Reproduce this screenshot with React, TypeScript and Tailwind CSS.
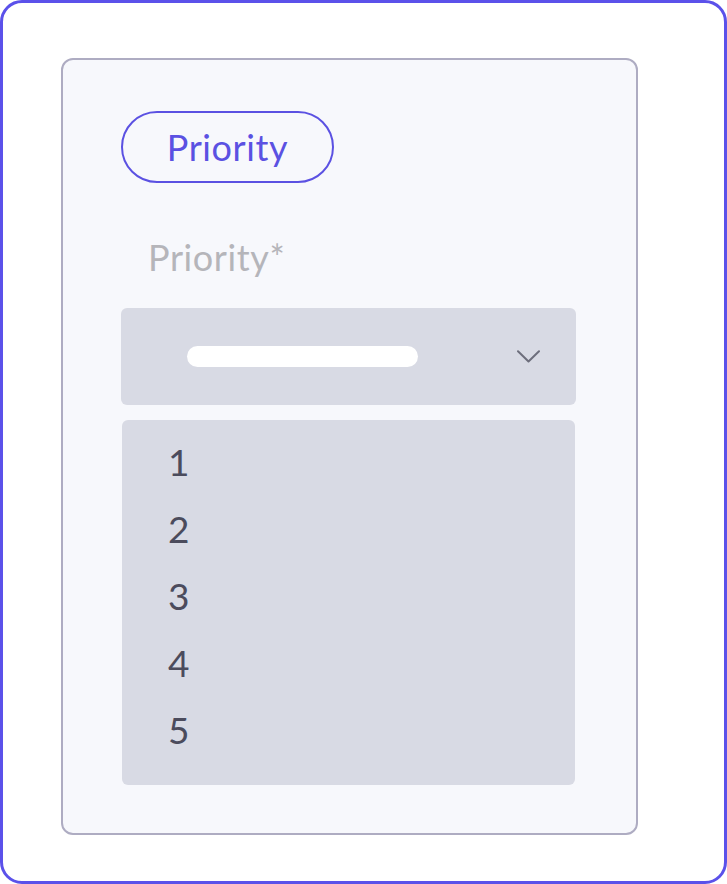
export default function App() {
  const options = ["1", "2", "3", "4", "5"];
  return (
    <div
      className="w-[727px] h-[884px] bg-white"
      style={{ fontFamily: "Lato, 'Open Sans', sans-serif" }}
    >
      <div className="w-[727px] h-[884px] rounded-[22px] border-[3px] border-[#5b51ea] bg-white pt-[55px] pl-[58px]">
        <div className="w-[577px] h-[777px] rounded-[12px] border-2 border-[#aeacc2] bg-[#f7f8fc] pl-[58px] pt-[51px]">
          {/* tag */}
          <div className="w-[213px] h-[72px] rounded-full border-2 border-[#5b51e2] flex items-center justify-center text-[36px] leading-[36px] tracking-[0.6px] text-[#5b51e2]">
            Priority
          </div>

          {/* field label */}
          <div className="mt-[56px] pl-[27px] text-[36px] leading-[36px] tracking-[0.6px] text-[#b5b5ba]">
            Priority*
          </div>

          {/* select */}
          <div className="mt-[33px] w-[455px] h-[97px] rounded-[6px] bg-[#d8dae4] flex items-center pl-[66px] pr-[36px]">
            <div className="w-[231px] h-[21px] rounded-full bg-white" />
            <div className="flex-1" />
            <svg width="23" height="13" viewBox="0 0 23 13" fill="none">
              <path
                d="M1 1.2 L11.5 11.5 L22 1.2"
                stroke="#6d6e7c"
                strokeWidth="2"
                strokeLinecap="round"
                strokeLinejoin="round"
              />
            </svg>
          </div>

          {/* options list */}
          <div className="mt-[15px] ml-[1px] w-[453px] h-[365px] rounded-[6px] bg-[#d8dae4] pt-[8px] pl-[46px]">
            {options.map((o) => (
              <div key={o} className="h-[67px] leading-[67px] text-[37px] text-[#4b4b5c]">
                {o}
              </div>
            ))}
          </div>
        </div>
      </div>
    </div>
  );
}
